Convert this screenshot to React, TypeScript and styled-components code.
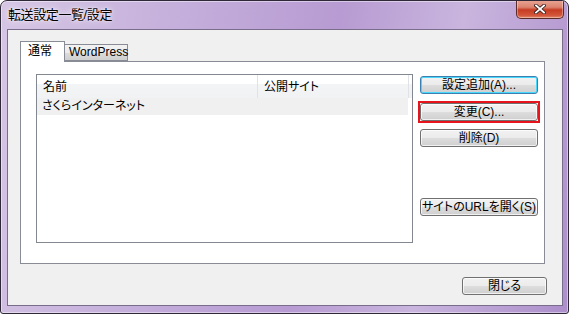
import styled, { createGlobalStyle } from "styled-components";

const GlobalStyle = createGlobalStyle`
  html, body {
    margin: 0;
    padding: 0;
    background: #ffffff;
  }
  body {
    font-family: "Liberation Sans", "Noto Sans CJK JP", sans-serif;
    font-feature-settings: "palt";
  }
`;

const Window = styled.div`
  box-sizing: border-box;
  width: 569px;
  height: 314px;
  display: flex;
  flex-direction: column;
  border: 1px solid #2e2838;
  border-radius: 7px 7px 3px 3px;
  background: linear-gradient(
    100deg,
    #d6c6e4 0%,
    #c4aedb 30%,
    #b79bd2 55%,
    #c9b5de 75%,
    #ad8fcb 100%
  );
  box-shadow: inset 0 0 0 1px rgba(255, 255, 255, 0.45);
  overflow: hidden;
`;

const TitleBar = styled.div`
  height: 28px;
  flex: none;
  display: flex;
  align-items: flex-start;
  justify-content: space-between;
`;

const Title = styled.div`
  padding: 6px 0 0 7px;
  font-size: 13px;
  line-height: 16px;
  color: #000;
  font-feature-settings: normal;
  letter-spacing: -0.4px;
  text-shadow: 0 0 6px rgba(255, 255, 255, 0.9), 0 0 2px #fff;
`;

const CloseButton = styled.div`
  width: 48px;
  height: 19px;
  margin: -1px 4px 0 0;
  display: flex;
  align-items: center;
  justify-content: center;
  box-sizing: border-box;
  border: 1px solid #5b2a2a;
  border-top: none;
  border-radius: 0 0 5px 5px;
  background: linear-gradient(
    180deg,
    #e9a695 0%,
    #dc8470 40%,
    #c63c22 55%,
    #d2553a 85%,
    #e48a6a 100%
  );
  box-shadow: inset 0 0 0 1px rgba(255, 255, 255, 0.35);
`;

const Client = styled.div`
  flex: 1;
  margin: 0 5px 7px 6px;
  box-sizing: border-box;
  border: 1px solid #7a6d8c;
  background: #f0f0f0;
  display: flex;
  flex-direction: column;
  padding: 11px 15px 0 12px;
`;

const TabStrip = styled.div`
  display: flex;
  align-items: flex-end;
  height: 20px;
  position: relative;
  z-index: 1;
`;

const Tab = styled.div<{ $active?: boolean }>`
  box-sizing: border-box;
  height: ${(p) => (p.$active ? "21px" : "17px")};
  margin-bottom: ${(p) => (p.$active ? "-1px" : "0")};
  padding: ${(p) => (p.$active ? "2px 7px 0 7px" : "0 4px 0 4px")};
  width: ${(p) => (p.$active ? "45px" : "64px")};
  border: 1px solid #898c95;
  border-bottom: ${(p) => (p.$active ? "none" : "1px solid #898c95")};
  margin-left: ${(p) => (p.$active ? "0" : "-1px")};
  background: ${(p) =>
    p.$active ? "#ffffff" : "linear-gradient(180deg, #f2f2f2 0%, #ebebeb 50%, #dcdcdc 51%, #cfcfcf 100%)"};
  font-size: 12px;
  line-height: 15px;
  color: #000;
  white-space: nowrap;
`;

const Panel = styled.div`
  box-sizing: border-box;
  height: 203px;
  margin-right: 2px;
  border: 1px solid #898c95;
  background: #ffffff;
  display: flex;
  gap: 7px;
  padding: 12px 6px 0 15px;
`;

const List = styled.div`
  box-sizing: border-box;
  width: 377px;
  height: 169px;
  border: 1px solid #828790;
  background: #fff;
  display: flex;
  flex-direction: column;
`;

const HeaderRow = styled.div`
  display: flex;
  height: 23px;
  background: linear-gradient(180deg, #ffffff 0%, #ffffff 40%, #f3f4f6 41%, #f1f2f4 100%);
`;

const HeaderCell = styled.div<{ $w: number }>`
  width: ${(p) => p.$w}px;
  box-sizing: border-box;
  padding: 5px 0 0 6px;
  border-right: 1px solid #e0e2e6;
  font-size: 12px;
  line-height: 15px;
  color: #000;
`;

const Row = styled.div`
  display: flex;
  height: 17px;
  width: 371px;
  background: #f0f0f0;
`;

const Cell = styled.div<{ $w: number }>`
  width: ${(p) => p.$w}px;
  padding-left: 5px;
  font-size: 12px;
  line-height: 17px;
  color: #000;
  white-space: nowrap;
`;

const ButtonColumn = styled.div`
  display: flex;
  flex-direction: column;
  padding-top: 2px;
`;

const Marker = styled.div`
  margin: 7px -2px -2px -2px;
  border: 2px solid #e8141c;
`;

const Button = styled.div<{ $default?: boolean; $gap?: number; $w?: number }>`
  box-sizing: border-box;
  width: ${(p) => p.$w ?? 118}px;
  height: 18px;
  margin-top: ${(p) => p.$gap ?? 0}px;
  display: flex;
  align-items: center;
  justify-content: center;
  border: 1px solid ${(p) => (p.$default ? "#3c7fb1" : "#707070")};
  border-radius: 3px;
  background: linear-gradient(180deg, #f2f2f2 0%, #ebebeb 50%, #dddddd 51%, #cfcfcf 100%);
  box-shadow: ${(p) =>
    p.$default ? "inset 0 0 0 1px #48d8fb" : "inset 0 0 0 1px rgba(255,255,255,0.7)"};
  font-size: 12px;
  line-height: 14px;
  color: #000;
  white-space: nowrap;
`;

const Footer = styled.div`
  display: flex;
  justify-content: flex-end;
  margin-top: 13px;
`;

export default function App() {
  return (
    <>
      <GlobalStyle />
      <Window>
        <TitleBar>
          <Title>転送設定一覧/設定</Title>
          <CloseButton>
            <svg width="12" height="10" viewBox="0 0 12 10">
              <path
                d="M2 1.5 L10 8.5 M10 1.5 L2 8.5"
                stroke="#3a2323"
                strokeWidth="3.6"
                strokeLinecap="square"
              />
              <path
                d="M2 1.5 L10 8.5 M10 1.5 L2 8.5"
                stroke="#ffffff"
                strokeWidth="1.8"
                strokeLinecap="square"
              />
            </svg>
          </CloseButton>
        </TitleBar>
        <Client>
          <TabStrip>
            <Tab $active>通常</Tab>
            <Tab>WordPress</Tab>
          </TabStrip>
          <Panel>
            <List>
              <HeaderRow>
                <HeaderCell $w={221}>名前</HeaderCell>
                <HeaderCell $w={151}>公開サイト</HeaderCell>
              </HeaderRow>
              <Row>
                <Cell $w={221}>さくらインターネット</Cell>
                <Cell $w={150}></Cell>
              </Row>
            </List>
            <ButtonColumn>
              <Button $default>設定追加(A)...</Button>
              <Marker>
                <Button>変更(C)...</Button>
              </Marker>
              <Button $gap={8}>削除(D)</Button>
              <Button $gap={51}>サイトのURLを開く(S)</Button>
            </ButtonColumn>
          </Panel>
          <Footer>
            <Button $w={85}>閉じる</Button>
          </Footer>
        </Client>
      </Window>
    </>
  );
}
